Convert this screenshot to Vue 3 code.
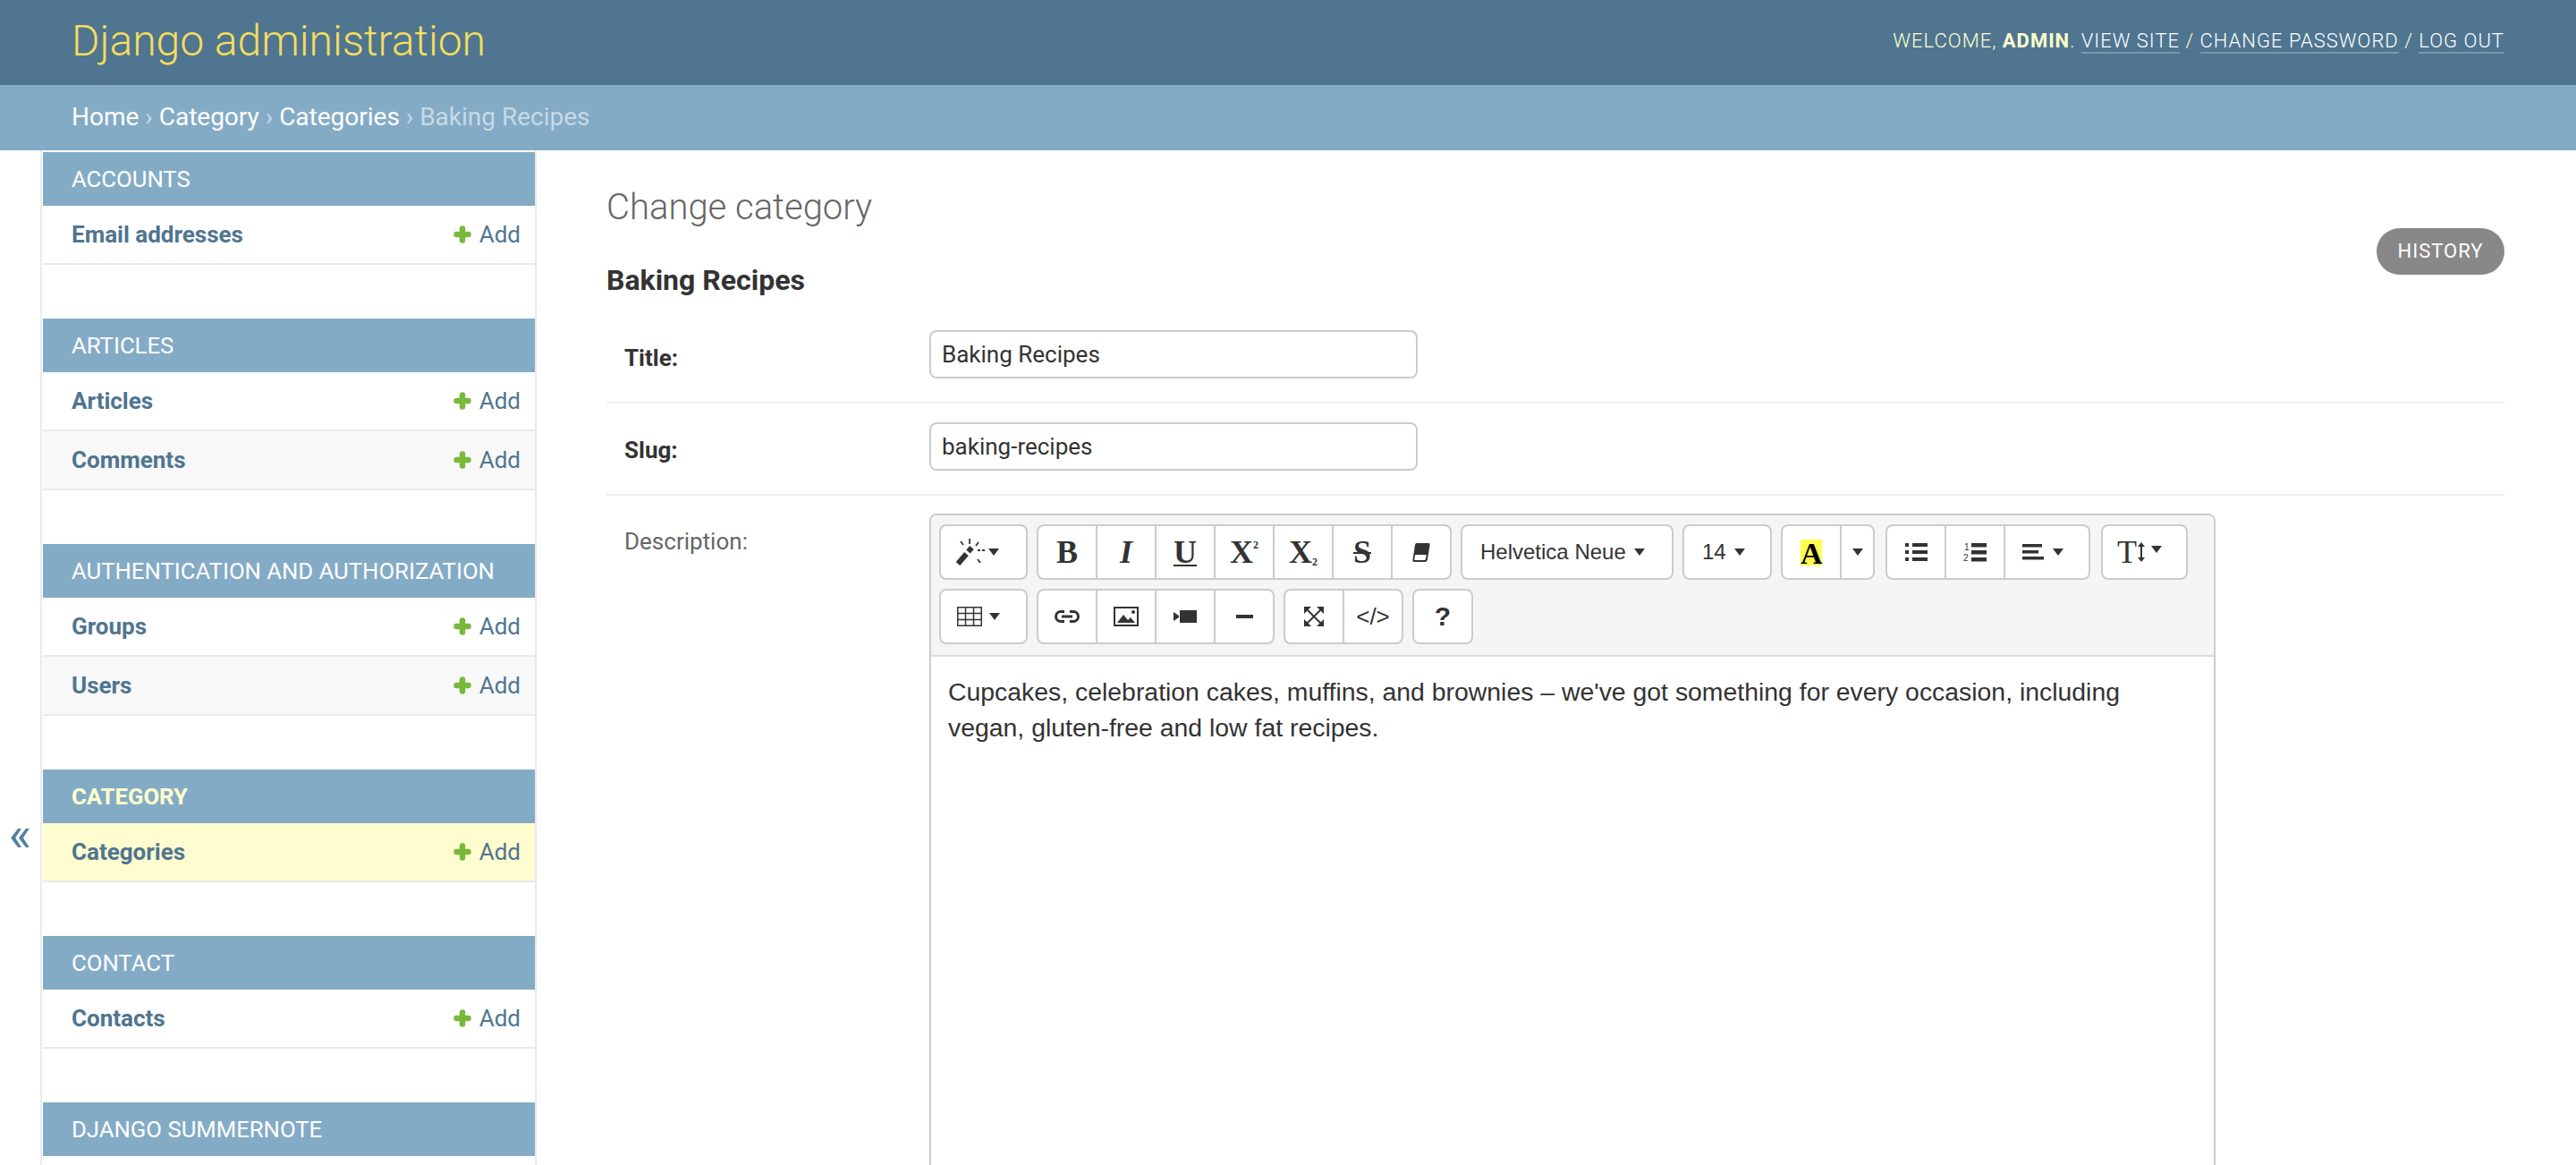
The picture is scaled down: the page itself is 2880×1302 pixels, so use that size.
<template>
  <div class="page">
    <header class="top">
      <div class="brand">Django administration</div>
      <div class="tools">
        WELCOME, <strong>ADMIN</strong>.
        <a>VIEW SITE</a> / <a>CHANGE PASSWORD</a> / <a>LOG OUT</a>
      </div>
    </header>
    <div class="crumbs">
      <a>Home</a> › <a>Category</a> › <a>Categories</a> › Baking Recipes
    </div>

    <div class="body">
      <div class="toggle">«</div>

      <nav class="sidebar">
        <section v-for="mod in modules" :key="mod.title" class="module">
          <h3 :class="{ current: mod.current }">{{ mod.title }}</h3>
          <div
            v-for="row in mod.rows"
            :key="row"
            class="row"
            :class="{ selected: mod.current }"
          >
            <a class="model">{{ row }}</a>
            <a class="add">
              <svg width="20" height="20" viewBox="0 0 20 20"><path stroke="#7ab83c" stroke-width="6.500" stroke-linecap="round" d="M10 3.500v13M3.500 10h13" /></svg>
              Add
            </a>
          </div>
        </section>
      </nav>

      <main class="content">
        <h1>Change category</h1>
        <a class="history">HISTORY</a>
        <h2>Baking Recipes</h2>

        <div class="form-row">
          <label class="required">Title:</label>
          <input class="text" value="Baking Recipes" />
        </div>
        <div class="form-row">
          <label class="required">Slug:</label>
          <input class="text" value="baking-recipes" />
        </div>
        <div class="form-row last">
          <label>Description:</label>
          <div class="editor">
            <div class="toolbar">
              <div class="bar">
                <div class="group">
                  <button class="w99">
                    <svg width="33" height="30" viewBox="0 0 33 30">
                      <path fill="none" stroke="#333" stroke-width="6" d="M2 28 11.500 17M13.500 14.500l4-4.500" />
                      <path fill="none" stroke="#333" stroke-width="1.800" d="M15 0v6M5 3l3 4M25 4l-3 4M24 13h3M29 13h3M24 23l3 4" />
                    </svg>
                    <i class="caret"></i>
                  </button>
                </div>
                <div class="group">
                  <button class="glyph"><b>B</b></button>
                  <button class="glyph"><b><em>I</em></b></button>
                  <button class="glyph"><b class="under">U</b></button>
                  <button class="glyph"><b>X</b><small class="sup">2</small></button>
                  <button class="glyph"><b>X</b><small class="sub">2</small></button>
                  <button class="glyph"><b class="strike">S</b></button>
                  <button>
                    <svg width="20" height="21" viewBox="0 0 20 21">
                      <path fill="#333" d="M5 0h13q2 0 1.600 2L17 18q-.5 3-3 3H2q-2 0-1.600-2L3 2q.3-2 2-2z" />
                      <path fill="#fff" d="M3.200 13h12.600l-1 5q-.2 1-1 1H3q-.8 0-.7-1z" />
                    </svg>
                  </button>
                </div>
                <div class="group">
                  <button class="w238 label">Helvetica Neue<i class="caret"></i></button>
                </div>
                <div class="group">
                  <button class="w100 label">14<i class="caret"></i></button>
                </div>
                <div class="group">
                  <button class="glyph"><span class="hilite">A</span></button>
                  <button class="w39"><i class="caret"></i></button>
                </div>
                <div class="group wide-gap">
                  <button>
                    <svg width="25" height="20" viewBox="0 0 25 20">
                      <path fill="#333" d="M0 0h4v4H0zM8 0h17v4H8zM0 8h4v4H0zM8 8h17v4H8zM0 16h4v4H0zM8 16h17v4H8z" />
                    </svg>
                  </button>
                  <button>
                    <svg width="26" height="22" viewBox="0 0 26 22">
                      <path fill="#333" d="M9 1h17v4.500H9zM9 9h17v4.500H9zM9 17h17v4.500H9z" />
                      <text x="1" y="9" font-size="10" fill="#333" font-family="Liberation Sans">1</text>
                      <text x="0" y="21" font-size="10" fill="#333" font-family="Liberation Sans">2</text>
                    </svg>
                  </button>
                  <button class="w97 align-btn">
                    <svg width="24" height="18" viewBox="0 0 24 18">
                      <path fill="#333" d="M0 0h22v3.500H0zM0 7h18v3.500H0zM0 14h24v3.500H0z" />
                    </svg>
                    <i class="caret"></i>
                  </button>
                </div>
                <div class="group">
                  <button class="w97 height-btn">
                    <span class="t">T</span>
                    <svg width="8" height="22" viewBox="0 0 8 22">
                      <path fill="#333" d="M4 0l4 5H5v12h3l-4 5-4-5h3V5H0z" />
                    </svg>
                    <i class="caret"></i>
                  </button>
                </div>
              </div>
              <div class="bar">
                <div class="group">
                  <button class="w99 table-btn">
                    <svg width="28" height="22" viewBox="0 0 28 22">
                      <path fill="none" stroke="#333" stroke-width="1.500" d="M.75.75h26.500v20.500H.75zM.75 7.500h26.500M.75 14.500h26.500M9.500.75v20.500M18.500.75v20.500" />
                    </svg>
                    <i class="caret"></i>
                  </button>
                </div>
                <div class="group">
                  <button>
                    <svg width="28" height="14" viewBox="0 0 28 14">
                      <path fill="none" stroke="#333" stroke-width="3" d="M11 1.500H7a5.500 5.500 0 0 0 0 11h4M17 1.500h4a5.500 5.500 0 0 1 0 11h-4M8 7h12" />
                    </svg>
                  </button>
                  <button>
                    <svg width="28" height="22" viewBox="0 0 28 22">
                      <path fill="none" stroke="#333" stroke-width="2" d="M1 1h26v20H1z" />
                      <path fill="#333" d="M4 18l7-9 5 6 3-3 5 6z" />
                      <circle cx="22" cy="6" r="2" fill="#333" />
                    </svg>
                  </button>
                  <button>
                    <svg width="26" height="14" viewBox="0 0 26 14">
                      <path fill="#333" d="M0 2l6 4v2l-6 4zM7 0h19v14H7z" />
                    </svg>
                  </button>
                  <button>
                    <svg width="19" height="4" viewBox="0 0 19 4"><path fill="#333" d="M0 0h19v4H0z" /></svg>
                  </button>
                </div>
                <div class="group">
                  <button>
                    <svg width="22" height="22" viewBox="0 0 22 22">
                      <path fill="#333" d="M0 0h8L0 8zM22 0v8L14 0zM0 22v-8l8 8zM22 22h-8l8-8z" />
                      <path fill="none" stroke="#333" stroke-width="1.800" d="M3 3l16 16M19 3 3 19" />
                    </svg>
                  </button>
                  <button class="code">&lt;/&gt;</button>
                </div>
                <div class="group">
                  <button class="help">?</button>
                </div>
              </div>
            </div>
            <div class="editable">
              Cupcakes, celebration cakes, muffins, and brownies – we've got something for every occasion, including vegan, gluten-free and low fat recipes.
            </div>
          </div>
        </div>
      </main>
    </div>
  </div>
</template>

<script setup>
const modules = [
  { title: 'Accounts', rows: ['Email addresses'] },
  { title: 'Articles', rows: ['Articles', 'Comments'] },
  { title: 'Authentication and Authorization', rows: ['Groups', 'Users'] },
  { title: 'Category', rows: ['Categories'], current: true },
  { title: 'Contact', rows: ['Contacts'] },
  { title: 'Django Summernote', rows: [] }
]
</script>

<style>
html, body {
  margin: 0;
  overflow: hidden;
}
</style>

<style scoped>
.page {
  height: 100vh;
  overflow: hidden;
  display: flex;
  flex-direction: column;
  font-family: Roboto, "Liberation Sans", sans-serif;
  color: #333;
  background: #fff;
}

.top {
  height: 95px;
  box-sizing: border-box;
  padding: 0 80px 4px 80px;
  flex: none;
  display: flex;
  justify-content: space-between;
  align-items: center;
  background: #4f7590;
}
.brand {
  font-size: 48px;
  font-weight: 300;
  color: #f5dd5d;
}
.tools {
  font-size: 22px;
  font-weight: 300;
  letter-spacing: 1px;
  color: #ffc;
  white-space: pre-wrap;
}
.tools strong {
  font-weight: 700;
}
.tools a {
  color: #fff;
  border-bottom: 2px solid rgba(255, 255, 255, 0.25);
}

.crumbs {
  height: 73px;
  flex: none;
  line-height: 72px;
  padding-left: 80px;
  font-size: 28px;
  color: #c6dae6;
  background: #84abc5;
}
.crumbs a {
  color: #fff;
}

.body {
  flex: 1;
  min-height: 0;
  display: flex;
}

.toggle {
  width: 45px;
  flex: none;
  border-right: 2px solid #eaeaea;
  margin-right: 1px;
  padding-top: 742px;
  text-align: center;
  font-size: 54px;
  line-height: 46px;
  color: #4f7f9f;
}

.sidebar {
  width: 550px;
  flex: none;
  padding-top: 2px;
  border-right: 2px solid #eaeaea;
}
.module {
  margin-bottom: 60px;
}
.module h3 {
  margin: 0;
  height: 60px;
  line-height: 60px;
  padding-left: 32px;
  font-size: 25.7px;
  font-weight: 400;
  text-transform: uppercase;
  color: #fff;
  background: #84abc5;
}
.module h3.current {
  font-weight: 700;
  color: #ffc;
}
.row {
  height: 64px;
  display: flex;
  justify-content: space-between;
  align-items: center;
  padding: 0 16px 0 32px;
  border-bottom: 2px solid #eaeaea;
  font-size: 26px;
}
.row:nth-child(odd) {
  background: #f8f8f8;
}
.row.selected {
  background: #fffccf;
}
.model {
  font-weight: 700;
  color: #4f7590;
}
.add {
  display: flex;
  align-items: center;
  gap: 9px;
  color: #4f7590;
}

.content {
  flex: 1;
  min-width: 0;
  padding: 40px 80px 0 78px;
}
h1 {
  margin: 2px 0 40px;
  font-size: 40px;
  line-height: 44px;
  font-weight: 300;
  color: #666;
}
.history {
  float: right;
  margin-top: -39px;
  width: 143px;
  height: 52px;
  line-height: 52px;
  text-align: center;
  border-radius: 30px;
  font-size: 22px;
  letter-spacing: 1px;
  color: #fff;
  background: #888;
}
h2 {
  margin: 0 0 16px;
  font-size: 32px;
  line-height: 38px;
  font-weight: 700;
  color: #333;
}

.form-row {
  display: flex;
  padding: 21px 0 26px 20px;
  border-bottom: 2px solid #eee;
}
.form-row.last {
  padding-top: 20px;
  border-bottom: 0;
}
label {
  width: 341px;
  flex: none;
  padding-top: 16px;
  line-height: 30px;
  font-size: 26px;
  color: #666;
}
label.required {
  font-weight: 700;
  color: #333;
}
.text {
  width: 546px;
  height: 54px;
  box-sizing: border-box;
  padding: 0 12px;
  border: 2px solid #ccc;
  border-radius: 8px;
  font-family: Roboto, sans-serif;
  font-size: 26px;
  color: #333;
}

.editor {
  width: 1438px;
  flex: none;
  height: 1000px;
  box-sizing: border-box;
  border: 2px solid #ccc;
  border-radius: 8px;
}
.toolbar {
  display: flex;
  flex-direction: column;
  gap: 10px;
  padding: 10px 9px 12px;
  background: #f5f5f5;
  border-bottom: 2px solid #ddd;
  border-radius: 6px 6px 0 0;
}
.bar {
  display: flex;
  gap: 10px;
}
.group {
  display: flex;
}
.wide-gap {
  margin-left: 2px;
  margin-right: 2px;
}
button {
  width: 68px;
  height: 62px;
  box-sizing: border-box;
  margin: 0 0 0 -2px;
  padding: 0;
  display: flex;
  align-items: center;
  justify-content: center;
  background: #fff;
  border: 2px solid #ccc;
  color: #333;
  font-family: "Liberation Sans", sans-serif;
  font-size: 26px;
}
.group button:first-child {
  margin-left: 0;
  border-radius: 8px 0 0 8px;
}
.group button:last-child {
  border-radius: 0 8px 8px 0;
}
.group button:only-child {
  border-radius: 8px;
}
.w99 {
  width: 99px;
  justify-content: flex-start;
  padding-left: 17px;
  gap: 3px;
}
.table-btn {
  padding-left: 18px;
  gap: 8px;
}
.w238 { width: 238px; }
.w100 { width: 100px; }
.w39 { width: 39px; }
.w97 {
  width: 97px;
  justify-content: flex-start;
}
.label {
  justify-content: flex-start;
  padding-left: 20px;
  gap: 9px;
  font-size: 24px;
}
.align-btn {
  padding-left: 19px;
  gap: 10px;
}

.caret {
  display: inline-block;
  flex: none;
  width: 0;
  height: 0;
  border-left: 6px solid transparent;
  border-right: 6px solid transparent;
  border-top: 8px solid #333;
}

.glyph {
  font-family: "Liberation Serif", serif;
  font-size: 36px;
}
.glyph b {
  font-weight: 700;
  line-height: 1;
}
.under {
  text-decoration: underline;
  text-decoration-thickness: 2px;
  text-underline-offset: 2px;
}
.strike {
  padding: 0 2px;
  text-decoration: line-through;
  text-decoration-thickness: 2px;
}
.sup, .sub {
  font-size: 12px;
  font-weight: 700;
}
.sup { margin-bottom: 16px; }
.sub { margin-top: 22px; }

.hilite {
  display: block;
  width: 24px;
  height: 29px;
  line-height: 32px;
  font-weight: 700;
  font-size: 34px;
  color: #000;
  background: #ffff4d;
}

.height-btn {
  padding-left: 16px;
  gap: 1px;
}
.height-btn .caret {
  margin-left: 6px;
  margin-bottom: 6px;
}
.t {
  font-family: "Liberation Serif", serif;
  font-size: 36px;
  line-height: 1;
}
.help {
  font-size: 30px;
  font-weight: 700;
}

.editable {
  padding: 19px 20px 0 19px;
  font-family: "Liberation Sans", sans-serif;
  font-size: 28.4px;
  line-height: 40px;
  color: #333;
  background: #fff;
}
</style>
